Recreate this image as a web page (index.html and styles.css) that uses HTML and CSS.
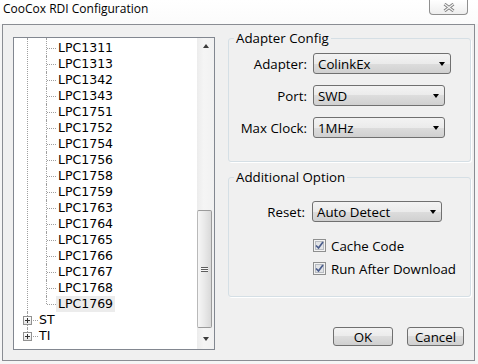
FILE: index.html
```html
<!DOCTYPE html>
<html lang="en">
<head>
    <meta charset="UTF-8">
    <meta name="viewport" content="width=device-width, initial-scale=1.0">
    <title>CooCox RDI Configuration</title>
    <link rel="stylesheet" href="styles.css">
</head>
<body>
    <div class="window">
        <div class="titlebar">
            <span class="title">CooCox RDI Configuration</span>
            <button class="close-btn" type="button">
                <svg width="12" height="9" viewBox="0 0 12 9">
                    <path d="M1.5 1 L10.5 8 M10.5 1 L1.5 8" stroke="#7c7c7c" stroke-width="3" fill="none"/>
                    <path d="M1.5 1 L10.5 8 M10.5 1 L1.5 8" stroke="#f6f6f6" stroke-width="1.2" fill="none"/>
                </svg>
            </button>
        </div>

        <div class="panel">
            <div class="tree-box">
                <ul class="tree">
                    <li>
                        <ul class="children">
                            <li><span class="leaf">LPC1311</span></li>
                            <li><span class="leaf">LPC1313</span></li>
                            <li><span class="leaf">LPC1342</span></li>
                            <li><span class="leaf">LPC1343</span></li>
                            <li><span class="leaf">LPC1751</span></li>
                            <li><span class="leaf">LPC1752</span></li>
                            <li><span class="leaf">LPC1754</span></li>
                            <li><span class="leaf">LPC1756</span></li>
                            <li><span class="leaf">LPC1758</span></li>
                            <li><span class="leaf">LPC1759</span></li>
                            <li><span class="leaf">LPC1763</span></li>
                            <li><span class="leaf">LPC1764</span></li>
                            <li><span class="leaf">LPC1765</span></li>
                            <li><span class="leaf">LPC1766</span></li>
                            <li><span class="leaf">LPC1767</span></li>
                            <li><span class="leaf">LPC1768</span></li>
                            <li class="last"><span class="leaf selected">LPC1769</span></li>
                        </ul>
                    </li>
                    <li><span class="expander"></span><span class="node-label">ST</span></li>
                    <li class="last"><span class="expander"></span><span class="node-label">TI</span></li>
                </ul>
                <div class="scrollbar">
                    <div class="arrow"><span class="arrow-up"></span></div>
                    <div class="track">
                        <div class="thumb"><span class="grip"></span></div>
                    </div>
                    <div class="arrow"><span class="arrow-down"></span></div>
                </div>
            </div>

            <div class="settings">
                <fieldset class="group adapter-group">
                    <legend>Adapter Config</legend>
                    <div class="field-row">
                        <label>Adapter:</label>
                        <div class="combo combo-wide"><span>ColinkEx</span><i class="caret"></i></div>
                    </div>
                    <div class="field-row">
                        <label>Port:</label>
                        <div class="combo"><span>SWD</span><i class="caret"></i></div>
                    </div>
                    <div class="field-row">
                        <label>Max Clock:</label>
                        <div class="combo"><span>1MHz</span><i class="caret"></i></div>
                    </div>
                </fieldset>

                <fieldset class="group option-group">
                    <legend>Additional Option</legend>
                    <div class="field-row">
                        <label>Reset:</label>
                        <div class="combo combo-reset"><span>Auto Detect</span><i class="caret"></i></div>
                    </div>
                    <div class="check-row first">
                        <svg class="checkbox" width="13" height="13" viewBox="0 0 13 13">
                            <rect x="0.5" y="0.5" width="12" height="12" fill="#f3f3f3" stroke="#8e8f8f"/>
                            <rect x="2.5" y="2.5" width="8" height="8" fill="#e2e4e7" stroke="#b8bcc2"/>
                            <path d="M3 6.5 L5.5 9 L10 3" stroke="#4b5d8c" stroke-width="1.7" fill="none"/>
                        </svg>
                        <span>Cache Code</span>
                    </div>
                    <div class="check-row">
                        <svg class="checkbox" width="13" height="13" viewBox="0 0 13 13">
                            <rect x="0.5" y="0.5" width="12" height="12" fill="#f3f3f3" stroke="#8e8f8f"/>
                            <rect x="2.5" y="2.5" width="8" height="8" fill="#e2e4e7" stroke="#b8bcc2"/>
                            <path d="M3 6.5 L5.5 9 L10 3" stroke="#4b5d8c" stroke-width="1.7" fill="none"/>
                        </svg>
                        <span>Run After Download</span>
                    </div>
                </fieldset>

                <div class="actions">
                    <button class="btn btn-ok" type="button">OK</button>
                    <button class="btn btn-cancel" type="button">Cancel</button>
                </div>
            </div>
        </div>
    </div>
</body>
</html>
```

FILE: styles.css
```css
* {
    box-sizing: border-box;
}

body {
    margin: 0;
    background: #f3f3f3;
    font-family: "Open Sans", "Noto Sans", sans-serif;
    font-size: 13.3px;
    color: #000;
}

.window {
    width: 478px;
    height: 364px;
    background: #f5f5f5;
}

/* title bar */
.titlebar {
    height: 24px;
    display: flex;
    justify-content: space-between;
    align-items: flex-start;
    background: linear-gradient(#ffffff, #fbfbfb);
}

.title {
    padding-left: 3px;
    font-size: 12px;
    line-height: 18px;
}

.close-btn {
    width: 39px;
    height: 15px;
    margin-right: 10px;
    padding: 0;
    border: 1px solid #8f8f8f;
    border-top: none;
    border-radius: 0 0 4px 4px;
    background: linear-gradient(#ffffff, #eeeeee);
    display: flex;
    justify-content: center;
    align-items: center;
}

/* main panel */
.panel {
    margin-left: 2px;
    width: 473px;
    height: 337px;
    border: 1px solid #8a8d93;
    background: #f0f0f0;
    display: flex;
    align-items: flex-start;
    gap: 13px;
    padding: 12px 3px 10px 10px;
}

/* device tree */
.tree-box {
    width: 202px;
    height: 313px;
    border: 1px solid #828790;
    background: #fff;
    display: flex;
    flex-shrink: 0;
}

.tree {
    flex: 1;
    list-style: none;
    margin: 0;
    padding: 2px 0 0 0;
    overflow: hidden;
    font-family: "DejaVu Sans", Verdana, sans-serif;
    font-size: 12.5px;
}

.tree li {
    position: relative;
    line-height: 16px;
    white-space: nowrap;
}

.tree > li {
    padding-left: 25px;
}

.tree > li::before {
    content: "";
    position: absolute;
    left: 13px;
    top: 0;
    bottom: 0;
    border-left: 1px dotted #a0a0a0;
}

.tree > li:first-child::before {
    top: -2px;
}

.tree > li.last::before {
    bottom: auto;
    height: 8px;
}

.expander {
    position: absolute;
    left: 9px;
    top: 4px;
    width: 9px;
    height: 9px;
    border: 1px solid #919191;
    z-index: 1;
    background:
        linear-gradient(#333, #333) 1px 3px / 5px 1px no-repeat,
        linear-gradient(#333, #333) 3px 1px / 1px 5px no-repeat,
        linear-gradient(#fff, #e4e4e4);
}

.node-label::before {
    content: "";
    position: absolute;
    left: 19px;
    top: 8px;
    width: 5px;
    border-top: 1px dotted #a0a0a0;
}

.children {
    list-style: none;
    margin: 0 0 0 7px;
    padding: 0;
}

.children li {
    padding-left: 10px;
}

.children li::before {
    content: "";
    position: absolute;
    left: 0;
    top: 0;
    bottom: 0;
    border-left: 1px dotted #a0a0a0;
}

.children li:first-child::before {
    top: -2px;
}

.children li.last::before {
    bottom: auto;
    height: 8px;
}

.children li::after {
    content: "";
    position: absolute;
    left: 1px;
    top: 8px;
    width: 9px;
    border-top: 1px dotted #a0a0a0;
}

.leaf {
    display: inline-block;
    padding: 0 2px;
}

.leaf.selected {
    background: #ececec;
}

/* scrollbar */
.scrollbar {
    width: 17px;
    display: flex;
    flex-direction: column;
    background: linear-gradient(to right, #ececec, #f5f5f5 40%, #f1f1f1);
}

.arrow {
    height: 17px;
    display: flex;
    justify-content: center;
    align-items: center;
}

.arrow-up,
.arrow-down {
    width: 1px;
    height: 0;
    border-left: 3px solid transparent;
    border-right: 3px solid transparent;
}

.arrow-up {
    border-bottom: 4px solid #3c3c3c;
    margin-top: -2px;
}

.arrow-down {
    border-top: 4px solid #3c3c3c;
    margin-top: -4px;
}

.track {
    flex: 1;
}

.thumb {
    width: 15px;
    height: 118px;
    margin-top: 155px;
    border: 1px solid #9b9b9b;
    border-left-color: #b9b9b9;
    border-radius: 2px;
    background: linear-gradient(to right, #f6f6f6, #e9e9e9 50%, #d9d9d9);
    display: flex;
    justify-content: center;
    align-items: center;
}

.grip {
    width: 7px;
    height: 5px;
    background: repeating-linear-gradient(#5e5e5e 0 1px, #f7f7f7 1px 2px);
}

/* settings column */
.settings {
    width: 243px;
    margin-top: -8px;
    display: flex;
    flex-direction: column;
}

.group {
    margin: 0;
    border: 1px solid #d5dfe5;
    border-radius: 3px;
    box-shadow: 1px 1px 0 #ffffff;
    display: flex;
    flex-direction: column;
}

.group legend {
    margin-left: 5px;
    padding: 0 2px;
    line-height: 18px;
}

.adapter-group {
    padding: 6px 0 23px 0;
    gap: 11px;
}

.option-group {
    margin-top: 6px;
    padding: 15px 0 18px 0;
}

.field-row {
    display: flex;
    align-items: center;
    height: 21px;
}

.field-row label {
    width: 84px;
    padding-right: 6px;
    text-align: right;
}

.option-group .field-row label {
    width: 83px;
    padding-right: 7px;
}

.combo {
    width: 132px;
    height: 21px;
    padding: 0 5px 0 4px;
    border: 1px solid #707070;
    border-radius: 3px;
    background: linear-gradient(#f3f3f3, #ebebeb 50%, #dddddd 50%, #d0d0d0);
    display: flex;
    justify-content: space-between;
    align-items: center;
}

.combo-wide {
    width: 138px;
}

.combo-reset {
    width: 130px;
}

.caret {
    width: 1px;
    height: 0;
    border-left: 3px solid transparent;
    border-right: 3px solid transparent;
    border-top: 4px solid #000;
}

.check-row {
    display: flex;
    align-items: center;
    gap: 5px;
    height: 19px;
    margin-left: 84px;
    margin-top: 4px;
}

.check-row.first {
    margin-top: 14px;
}

/* buttons */
.actions {
    display: flex;
    justify-content: flex-end;
    gap: 14px;
    margin-top: 30px;
    padding-right: 7px;
}

.btn {
    height: 19px;
    padding: 0;
    border: 1px solid #707070;
    border-radius: 3px;
    background: linear-gradient(#f3f3f3, #ebebeb 50%, #dddddd 50%, #d0d0d0);
    font-family: "Open Sans", "Noto Sans", sans-serif;
    font-size: 13.3px;
    line-height: 16px;
    color: #000;
}

.btn-ok {
    width: 60px;
}

.btn-cancel {
    width: 57px;
}
```
